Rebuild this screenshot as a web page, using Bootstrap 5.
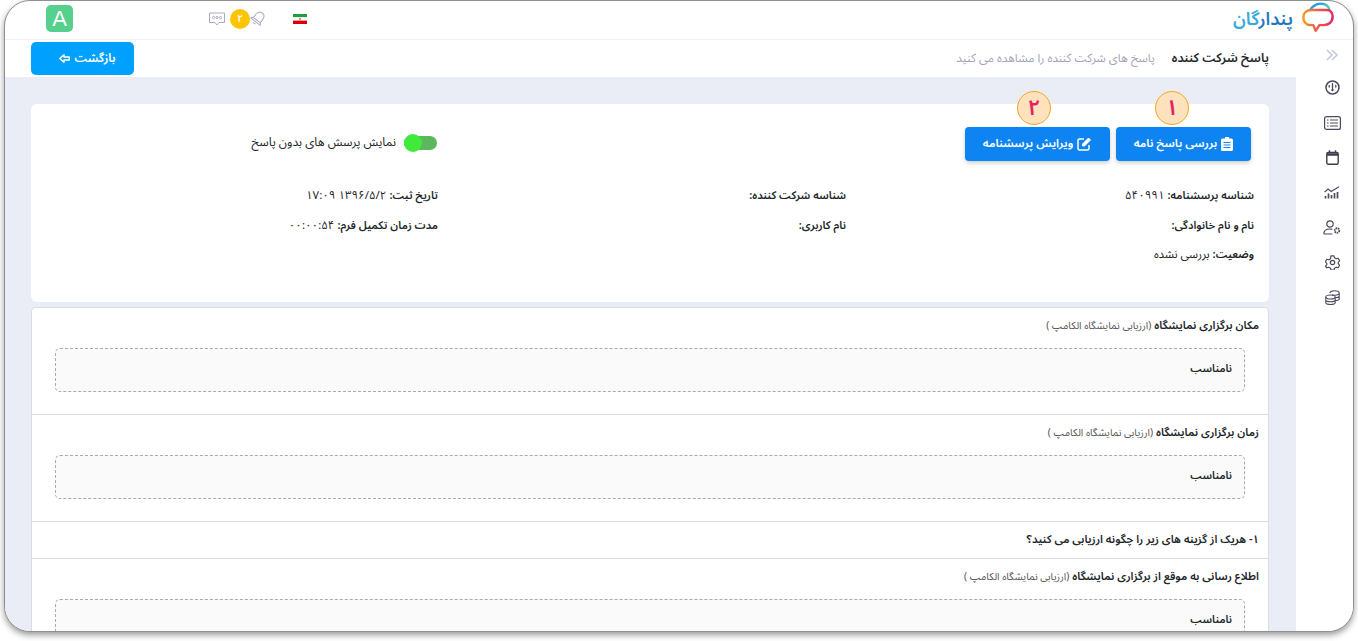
<!DOCTYPE html>
<html lang="fa" dir="rtl">
<head>
<meta charset="utf-8">
<title>پاسخ شرکت کننده</title>
<link rel="stylesheet" href="https://cdn.jsdelivr.net/npm/bootstrap@5.3.0/dist/css/bootstrap.min.css">
<style>
html,body{height:641px;overflow:hidden;background:#fff}
body{font-family:"Noto Sans Arabic","Vazirmatn","DejaVu Sans",sans-serif;font-size:12px;color:#212529;padding:0 4px 9px 4px}
.frame{height:632px;border:1px solid #8f8f8f;border-radius:26px;box-shadow:0 3px 6px rgba(0,0,0,.4);overflow:hidden;background:#fff;display:flex;flex-direction:column}
.topbar{height:39px;flex:none;border-bottom:1px solid #eef0f4;padding:0 18px 3px 41px}
.logo-name{font-size:18px;font-weight:600;color:#1f78bd;line-height:1}
.logo-name span{color:#38a9de}
.avatar{width:27px;height:27px;border-radius:5px;background:#55d08d;color:#fff;font:22px/27px "Liberation Sans",sans-serif;text-align:center;margin-right:136px}
.tools{margin-left:27px}
.flagbox{width:14px;height:10px;flex:none}
.bellcount{width:20px;height:20px;border-radius:50%;background:#ffc400;color:#fff;font-size:10px;font-weight:600;line-height:20px;text-align:center}
.workspace{flex:1;min-height:0}
.sidebar{width:57px;flex:none;background:#fff;padding:0 12px 0 0}
.navicon{height:35px;width:18px;display:flex;align-items:center;justify-content:center;color:#4a4a5c}
.navicon.first{height:30px}
.navicon svg{display:block}
.mainpane{flex:1;min-width:0;background:#ebedf6;overflow:hidden}
.subhead{height:37px;background:#fff;padding:0 27px 0 26px}
.subhead h1{font-size:12.500px;font-weight:650;margin:0 0 0 17px;color:#212529}
.subhead p{margin:0;color:#a2a3b7;font-size:11.800px}
.backbtn{width:103px;height:33px;background:#00a0ff;border:0;color:#fff;font-size:11.800px;font-weight:650;border-radius:5px}
.backbtn.p-0{padding-left:10px!important}
.infocard{margin:27px 27px 0 26px;height:198px;background:#fff;border-radius:6px;padding:23px 7px 0;position:relative}
.actionbtn{height:34px;background:#0d84f2;border:0;color:#fff;font-size:11.600px;font-weight:650;border-radius:4px;box-shadow:0 2px 4px rgba(0,0,0,.2);padding:0;white-space:nowrap}
.actionbtn.first{width:135px;margin-right:11px}
.actionbtn.second{width:145px;margin-right:6px}
.callout{position:absolute;top:-13px;width:34px;height:34px;border-radius:50%;border:1px solid #f5a623;background:#fde2bd;color:#e91e63;font-size:22px;font-weight:600;line-height:32px;text-align:center}
.callout.one{right:80px}
.callout.two{right:218px}
.togglewrap{margin-right:auto;width:399px;margin-top:-2px}
.swtrack{width:33px;height:14px;border-radius:7px;background:#5cb85c;position:relative;flex:none}
.swknob{position:absolute;left:0;top:-2px;width:18px;height:18px;border-radius:50%;background:#3fea3a}
.infogrid{margin-top:20px}
.infocell{padding:0 8px 0 0;height:29.500px;line-height:29px;font-size:11.500px;white-space:nowrap}
.infocell b{font-weight:650;font-size:11px}
.qlist{margin:5px 27px 0 26px;background:#fff;border:1px solid #dcdcdc;border-radius:4px 4px 0 0}
.qitem{border-bottom:1px solid #dcdcdc;padding:9px 9px 0 23px}
.qitem.tall{height:107px}
.qitem.head{height:37px}
.qitem:last-child{border-bottom:0;height:90px}
.qtitle{font-size:11.200px;font-weight:650;line-height:18px;margin:0;white-space:nowrap}
.qtitle small{font-size:10.200px;font-weight:400;color:#555}
.answerbox{margin:13px 14px 0 0;height:44px;background:#fafafa;border:1px dashed #aaa;border-radius:5px;padding:0 12px;line-height:40px;font-weight:650;font-size:10.800px}
</style>
</head>
<body>
<div class="frame">
  <header class="topbar d-flex align-items-center justify-content-between">
    <div class="d-flex align-items-center gap-2">
      <svg width="34" height="35" viewBox="0 0 36 36" aria-hidden="true">
        <defs><linearGradient id="lg" x1="0" y1="0" x2="1" y2="0"><stop offset="0" stop-color="#f79a1e"/><stop offset=".5" stop-color="#ef5a4d"/><stop offset="1" stop-color="#e5285f"/></linearGradient></defs>
        <path d="M9 10 C13 3 20 1 25 3" fill="none" stroke="#2f9fd6" stroke-width="2.600" stroke-linecap="round"/>
        <path d="M25 3 C28 4 30 7 30 9" fill="none" stroke="#49c7b4" stroke-width="2.600" stroke-linecap="round"/>
        <path d="M11 9 H27 C31 9 33.500 12 33.500 16 C33.500 22 29 25 24 25 H19.500 L15.500 31 L13 25 H10 C5 25 2.500 21 2.500 17 C2.500 12 6 9 11 9 Z" fill="#fff" stroke="url(#lg)" stroke-width="2.600" stroke-linejoin="round"/>
      </svg>
      <div class="logo-name">پندار<span>گان</span></div>
    </div>
    <div class="d-flex align-items-center">
      <div class="tools d-flex align-items-center">
        <svg class="flagbox" viewBox="0 0 14 10" aria-hidden="true"><rect width="14" height="3.400" fill="#239f40"/><rect y="3.300" width="14" height="3.400" fill="#fff"/><rect y="6.600" width="14" height="3.400" fill="#da0000"/><circle cx="7" cy="5" r="1.200" fill="#e88"/></svg>
      </div>
      <div class="d-flex align-items-center">
        <svg width="16" height="17" viewBox="0 0 16 17" fill="none" stroke="#a9abc0" stroke-width="1" aria-hidden="true"><g transform="rotate(38 8 8.500)"><path d="M8 1.500c-3 0-4.300 2.300-4.300 5v3.500L2 12.500h12L12.300 10V6.500c0-2.700-1.300-5-4.300-5Z"/><path d="M6.500 14.500h3M3.500 10.500h9"/></g></svg>
        <div class="bellcount">۲</div>
        <svg width="21" height="14" viewBox="1 0 21 14" fill="none" stroke="#a9abc0" stroke-width="1" aria-hidden="true"><path d="M1.500 1h15v9.500h-5.500l-2 2.500-2-2.500h-5.500z"/><circle cx="5.500" cy="5.500" r="1.100"/><circle cx="9" cy="5.500" r="1.100"/><circle cx="12.500" cy="5.500" r="1.100"/></svg>
      </div>
      <div class="avatar">A</div>
    </div>
  </header>

  <div class="workspace d-flex">
    <nav class="sidebar d-flex flex-column align-items-start">
      <div class="navicon first"><svg width="14" height="14" viewBox="0 0 14 14" fill="none" stroke="#c6c8d8" stroke-width="1.600"><path d="M2 2l5 5-5 5M7 2l5 5-5 5"/></svg></div>
      <div class="navicon"><svg width="15" height="15" viewBox="0 0 15 15" fill="none" stroke="#4a4a5c" stroke-width="1.500"><circle cx="7.500" cy="7.500" r="6.500"/><path d="M7.500 3.500v5M4.200 5.500v1.500M10.800 5.500v1.500" stroke-linecap="round" stroke-width="1.300"/><circle cx="7.500" cy="10" r="1.200" fill="#4a4a5c" stroke="none"/></svg></div>
      <div class="navicon"><svg width="17" height="14" viewBox="0 0 17 14" fill="none" stroke="#4a4a5c" stroke-width="1.200"><rect x=".6" y=".6" width="15.800" height="12.800" rx="2"/><path d="M3 4h1.500M6 4h8M3 7h1.500M6 7h8M3 10h1.500M6 10h8"/></svg></div>
      <div class="navicon"><svg width="13" height="15" viewBox="0 0 13 15" fill="none" stroke="#3c3c4e" stroke-width="1.400"><rect x=".8" y="2.500" width="11.400" height="11.700" rx="1.500"/><path d="M1 4.500h11" stroke-width="2.400"/><path d="M3.500 .3v2.500M9.500 .3v2.500"/></svg></div>
      <div class="navicon"><svg width="16" height="13" viewBox="0 0 16 13" fill="none" stroke="#4a4a5c" stroke-width="1.100"><path d="M.6 6l3.500-3 3 2.500L15 .8"/><path d="M1.500 12.500V10M4.500 12.500V7.500M7.500 12.500V9M10.500 12.500V7M13.500 12.500V6" stroke-width="1.700"/></svg></div>
      <div class="navicon"><svg width="18" height="15" viewBox="0 0 18 15" fill="none" stroke="#4a4a5c" stroke-width="1.200"><circle cx="7" cy="4" r="3.200"/><path d="M.8 14c0-3.200 2.500-5 6-5 1 0 1.800.1 2.500.4M.8 14h8.500"/><circle cx="14" cy="10.500" r="2.300" stroke-width="1.800" stroke-dasharray="1.500 .6"/></svg></div>
      <div class="navicon"><svg width="15" height="15" viewBox="0 0 15 15" fill="none" stroke="#4a4a5c" stroke-width="1.200"><path d="M6 .8h3l.5 2 1.700 1 2-.6 1.400 2.600-1.400 1.500v1.400l1.400 1.500-1.400 2.600-2-.6-1.700 1-.5 2H6l-.5-2-1.700-1-2 .6L.4 11.200l1.400-1.500V8.300L.4 6.800 1.800 4.200l2 .6 1.700-1z" stroke-linejoin="round"/><circle cx="7.500" cy="7.500" r="2.200"/></svg></div>
      <div class="navicon"><svg width="15" height="15" viewBox="0 0 15 15" fill="none" stroke="#4a4a5c" stroke-width="1.100"><ellipse cx="5.500" cy="7" rx="4.700" ry="2"/><path d="M.8 7v5.500c0 1.200 2.100 2 4.700 2s4.700-.8 4.700-2V7M.8 9.800c0 1.200 2.100 2 4.700 2s4.700-.8 4.700-2"/><path d="M5 3c0-1.200 2-2.200 4.500-2.200S14.200 1.800 14.200 3v6c0 .8-1.500 1.600-4 1.800M10.500 7.800c2-.2 3.700-.9 3.700-1.800M7 4.900c.8.2 1.600.3 2.500.3 2.600 0 4.700-1 4.700-2.200"/></svg></div>
    </nav>

    <main class="mainpane">
      <div class="subhead d-flex align-items-center">
        <h1>پاسخ شرکت کننده</h1>
        <p>پاسخ های شرکت کننده را مشاهده می کنید</p>
        <button type="button" class="btn backbtn ms-0 me-auto d-flex align-items-center justify-content-center gap-1 p-0">بازگشت
          <svg width="11" height="9" viewBox="0 0 11 9"><path d="M.8 4.500 5 .8v2.200h5.200v3H5v2.200z" fill="none" stroke="#fff" stroke-width="1.400" stroke-linejoin="round"/></svg>
        </button>
      </div>

      <section class="infocard">
        <div class="d-flex align-items-center">
          <button type="button" class="btn actionbtn first d-flex align-items-center justify-content-center gap-1">
            <svg width="12" height="14" viewBox="0 0 12 14" fill="#fff"><path d="M4 0h4v1.500h2.500A1.500 1.500 0 0 1 12 3v9.500a1.500 1.500 0 0 1-1.500 1.500h-9A1.500 1.500 0 0 1 0 12.500V3a1.500 1.500 0 0 1 1.500-1.500H4z"/><path d="M2.500 5.500h7M2.500 8h7M2.500 10.500h7" stroke="#0d84f2" stroke-width="1"/></svg>
            بررسی پاسخ نامه</button>
          <button type="button" class="btn actionbtn second d-flex align-items-center justify-content-center gap-1">
            <svg width="15" height="14" viewBox="0 0 15 14" fill="none" stroke="#fff" stroke-width="1.500"><path d="M7 2H2.500A1.500 1.500 0 0 0 1 3.500v8A1.500 1.500 0 0 0 2.500 13h8a1.500 1.500 0 0 0 1.500-1.500V8"/><path d="M5.500 7 11.500 1l2 2-6 6H5.500z" fill="#fff" stroke-width="1"/></svg>
            ویرایش پرسشنامه</button>
          <div class="togglewrap d-flex align-items-center gap-2">
            <span class="swtrack"><span class="swknob"></span></span>
            <span>نمایش پرسش های بدون پاسخ</span>
          </div>
        </div>
        <div class="row g-0 infogrid">
          <div class="col-4 infocell"><b>شناسه پرسشنامه:</b> ۵۴۰۹۹۱</div>
          <div class="col-4 infocell"><b>شناسه شرکت کننده:</b></div>
          <div class="col-4 infocell"><b>تاریخ ثبت:</b> ۱۳۹۶/۵/۲ ۱۷:۰۹</div>
          <div class="col-4 infocell"><b>نام و نام خانوادگی:</b></div>
          <div class="col-4 infocell"><b>نام کاربری:</b></div>
          <div class="col-4 infocell"><b>مدت زمان تکمیل فرم:</b> ۰۰:۰۰:۵۴</div>
          <div class="col-4 infocell"><b>وضعیت:</b> بررسی نشده</div>
        </div>
        <div class="callout one">۱</div>
        <div class="callout two">۲</div>
      </section>

      <section class="qlist">
        <div class="qitem tall">
          <p class="qtitle">مکان برگزاری نمایشگاه <small>(ارزیابی نمایشگاه الکامپ )</small></p>
          <div class="answerbox">نامناسب</div>
        </div>
        <div class="qitem tall">
          <p class="qtitle">زمان برگزاری نمایشگاه <small>(ارزیابی نمایشگاه الکامپ )</small></p>
          <div class="answerbox">نامناسب</div>
        </div>
        <div class="qitem head">
          <p class="qtitle">۱- هریک از گزینه های زیر را چگونه ارزیابی می کنید؟</p>
        </div>
        <div class="qitem">
          <p class="qtitle">اطلاع رسانی به موقع از برگزاری نمایشگاه <small>(ارزیابی نمایشگاه الکامپ )</small></p>
          <div class="answerbox">نامناسب</div>
        </div>
      </section>
    </main>
  </div>
</div>
<script src="https://cdn.jsdelivr.net/npm/bootstrap@5.3.0/dist/js/bootstrap.bundle.min.js"></script>
</body>
</html>
